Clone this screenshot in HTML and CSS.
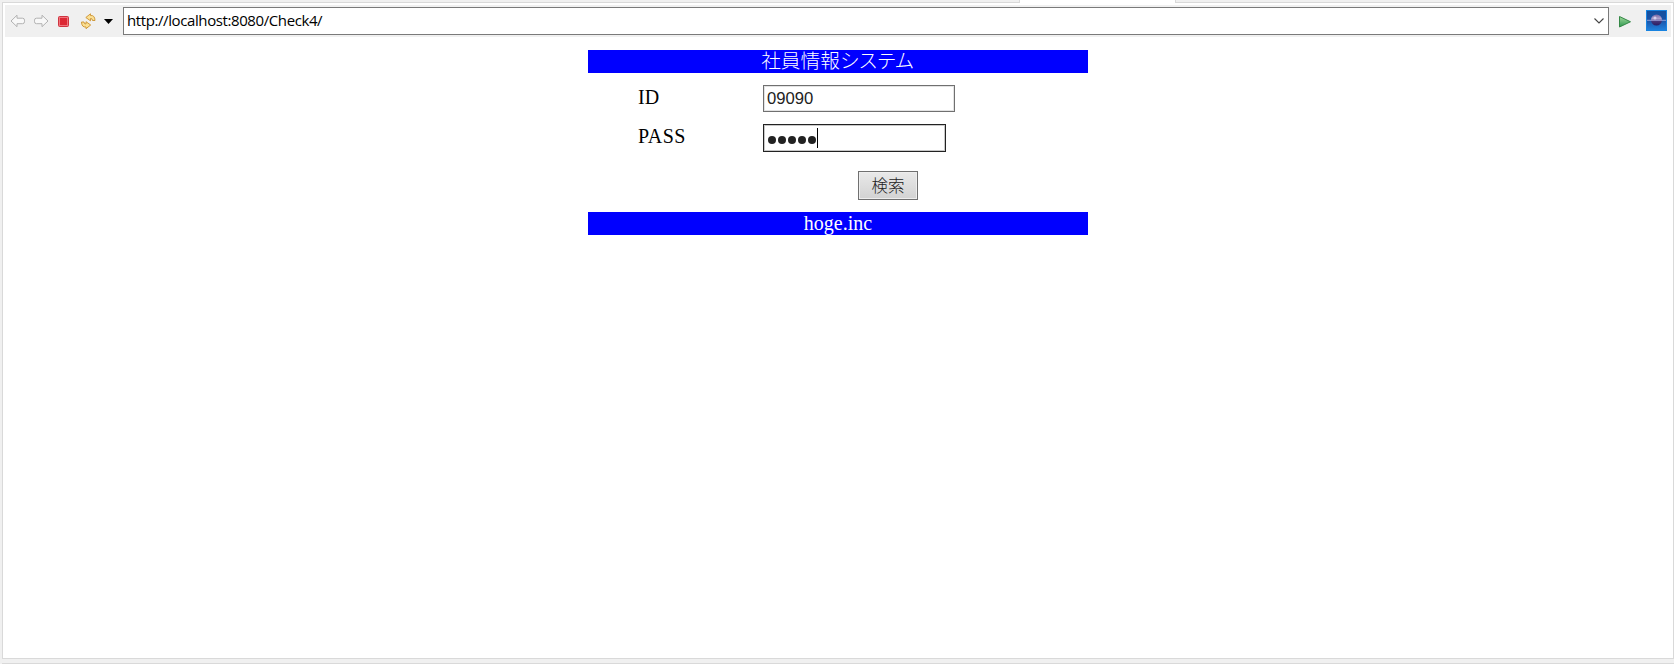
FILE: index.html
```html
<!DOCTYPE html>
<html lang="ja">
<head>
<meta charset="utf-8">
<title>社員情報システム</title>
<link rel="stylesheet" href="styles.css">
</head>
<body>
<div class="tabstrip"><span class="tabs-left"></span><span class="tab-active"></span><span class="tabs-right"></span></div>
<div class="browser">
  <div class="toolbar">
    <svg class="icons" width="118" height="32" viewBox="0 0 118 32">
      <g fill="#f8f8f8" stroke="#b2b2b2" stroke-linejoin="round">
        <path d="M6 16 12 10.200v3h5.500q2 0 2 2v1.500q0 2-2 2H12v3z"/>
        <path d="M43 16 37 10.200v3h-5.500q-2 0-2 2v1.500q0 2 2 2H37v3z"/>
      </g>
      <rect x="53.500" y="11.500" width="10" height="10" rx="1" fill="#f0747c" stroke="#cf3440"/>
      <rect x="55" y="13" width="7" height="7" fill="#dc2834"/>
      <g fill="#fbe094" stroke="#cc9230" stroke-width=".9" stroke-linejoin="round">
        <path d="M80.800 12.500 85.500 8.800V10.500Q89.800 10 90 15.500H87.500Q87.500 13.300 85.500 13.500V15.800z"/>
        <path d="M80.800 12.500 85.500 8.800V10.500Q89.800 10 90 15.500H87.500Q87.500 13.300 85.500 13.500V15.800z" transform="rotate(180 83.250 16.250)"/>
      </g>
      <path d="M99 14h9l-4.500 5z"/>
    </svg>
    <div class="address"><span class="url">http://localhost:8080/Check4/</span>
      <svg width="10" height="6" viewBox="0 0 10 6"><path d="M.5.500 5 5 9.500.500" fill="none" stroke="#444" stroke-width="1.100"/></svg>
    </div>
    <svg class="actions" width="62" height="32" viewBox="0 0 62 32">
      <defs>
        <linearGradient id="go" x2="0" y2="1"><stop stop-color="#a0d89a"/><stop offset="1" stop-color="#2f9850"/></linearGradient>
        <linearGradient id="sky" x2="0" y2="1"><stop stop-color="#154f9c"/><stop offset=".5" stop-color="#1b53a8"/><stop offset="1" stop-color="#2183de"/></linearGradient>
        <linearGradient id="moon" x2="0" y2="1"><stop stop-color="#7766a4"/><stop offset=".4" stop-color="#b4a8d2"/><stop offset=".55" stop-color="#4b3a7c"/><stop offset="1" stop-color="#2a1c62"/></linearGradient>
      </defs>
      <path d="M10.500 11.500v10.500l11-5.250z" fill="url(#go)" stroke="#348846" stroke-linejoin="round"/>
      <rect x="37.500" y="5.500" width="20" height="20" fill="url(#sky)" stroke="#1883e0"/>
      <circle cx="47.500" cy="15" r="5.500" fill="url(#moon)"/>
      <path d="M38 15.300h19" stroke="#a9b4e8" stroke-width=".8"/>
      <circle cx="46" cy="13" r="1.500" fill="#d8d0ec"/>
    </svg>
  </div>
  <main class="page">
    <h1 class="bar">社員情報<span class="kana">システム</span></h1>
    <div class="row"><span class="label">ID</span><div class="field">09090</div></div>
    <div class="row"><span class="label label-pass">PASS</span><div class="field focused"><i></i><i></i><i></i><i></i><i></i><b class="caret"></b></div></div>
    <div class="submit"><button class="button" type="button">検索</button></div>
    <footer class="bar bar-footer">hoge.inc</footer>
  </main>
</div>
<div class="bottom-edge"></div>
</body>
</html>
```
FILE: styles.css
```css
* { box-sizing: border-box; }
body { margin: 0; height: 664px; overflow: hidden; background: #f0f0f0; padding-left: 2px; }
svg { display: block; flex: none; }
.tabstrip { display: flex; height: 3px; }
.tabs-left { width: 1018px; border-right: 1px solid #d9d9d9; border-bottom: 1px solid #d9d9d9; }
.tab-active { width: 155px; background: #fff; }
.tabs-right { flex: 1; border-left: 1px solid #d9d9d9; border-bottom: 1px solid #d9d9d9; }
.browser { height: 656px; background: #fff; border: 1px solid #d9d9d9; border-top: 0; padding: 2px 2px 0; }
.bottom-edge { height: 5px; border-bottom: 1px solid #d9d9d9; }
.toolbar { height: 32px; display: flex; background: #f0f0f0; }
.address { flex: 1; height: 28px; margin-top: 2px; border: 1px solid #7a7a7a; background: #fff; display: flex; align-items: center; justify-content: space-between; padding: 0 4px 0 3px; font: 15px/26px "Open Sans", "Noto Sans", sans-serif; letter-spacing: -.4px; color: #000; }
.url { padding-bottom: 2px; line-height: 24px; }
.page { width: 500px; margin: 13px 0 0 583px; font: 20px/23px "Liberation Serif", "Noto Sans CJK JP", serif; color: #000; }
.bar { margin: 0; height: 23px; background: #00f; color: #fff; text-align: center; font-weight: 300; font-size: 20px; line-height: 20px; }
h1.bar { font-family: "Noto Sans CJK JP", sans-serif; font-size: 19.700px; padding-right: 2px; }
.kana { letter-spacing: -1.300px; }
.row { display: flex; margin-top: 12px; padding-left: 50px; }
.label { width: 125px; height: 24px; }
.label-pass { letter-spacing: .5px; }
.field { width: 192px; height: 27px; border: 1px solid #707070; box-shadow: inset 0 0 0 1px #e3e3e3; background: #fff; color: #222; padding-left: 3px; font: 16.670px/25px "Liberation Sans", sans-serif; }
.focused { width: 183px; height: 28px; border-color: #222; box-shadow: inset 0 0 0 1px #c8c8c8; display: flex; gap: 2px; padding: 11px 0 0 4px; }
.focused i { width: 8px; height: 8px; border-radius: 50%; background: #222; }
.caret { width: 1px; height: 20px; margin: -8px 0 0 -1px; background: #000; }
.submit { margin-top: 19px; padding-left: 270px; display: flex; }
.button { width: 60px; height: 29px; padding: 0; border: 1px solid #707070; border-radius: 0; box-shadow: inset 0 0 0 1px #eee; background: linear-gradient(#e9e9e9, #d2d2d2); color: #222; font: 300 16.500px/25px "Noto Sans CJK JP", sans-serif; }
.bar-footer { margin-top: 12px; line-height: 23px; font-weight: 400; }
.label { padding-top: 1px; }
```
